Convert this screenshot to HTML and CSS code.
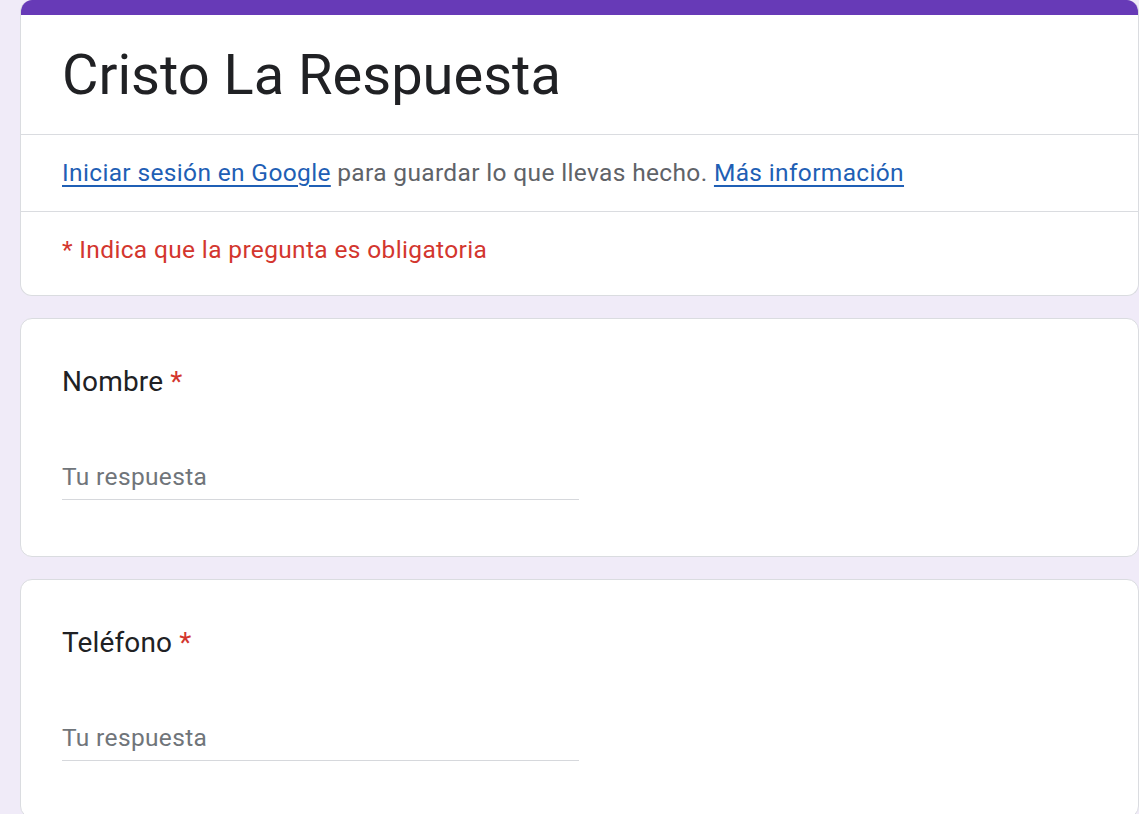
FILE: index.html
```html
<!DOCTYPE html>
<html>
<head>
    <meta charset="UTF-8">
    <title>Cristo La Respuesta</title>
    <link rel="stylesheet" href="styles.css">
</head>
<body>
<div id="form">
    <div class="card head">
        <div class="bar"></div>
        <h1 class="title">Cristo La Respuesta</h1>
        <div class="row signin">
            <a href="#">Iniciar sesión en Google</a> para guardar lo que llevas hecho. <a href="#">Más información</a>
        </div>
        <div class="row required">* Indica que la pregunta es obligatoria</div>
    </div>

    <div class="card question">
        <div class="label">Nombre <span class="star">*</span></div>
        <div class="answer">Tu respuesta</div>
    </div>

    <div class="card question">
        <div class="label">Teléfono <span class="star">*</span></div>
        <div class="answer">Tu respuesta</div>
    </div>
</div>
</body>
</html>
```

FILE: styles.css
```css
*{ margin:0; padding:0; box-sizing:border-box;}
html,body{
    height: 100%;
    overflow: hidden;
}
body{
    background: #f0ebf8;
    font-family: Roboto, "Liberation Sans", sans-serif;
    color: #202124;
}
#form{
    margin-left: 20px;
}
.card{
    background: #fff;
    border: 1px solid #dadce0;
    border-radius: 12px;
    margin-bottom: 22px;
    overflow: hidden;
}
.card.head{
    border-top: none;
}
.head .bar{
    height: 15px;
    background: #673ab7;
}
.head .title{
    font-size: 56px;
    font-weight: 400;
    line-height: 70px;
    padding: 25px 41px 24px;
    border-bottom: 1px solid #dadce0;
}
.row{
    font-size: 24.5px;
    letter-spacing: 0.35px;
    line-height: 36px;
    padding: 0 41px;
}
.signin{
    color: #5f6368;
    padding-top: 20px;
    padding-bottom: 20px;
    border-bottom: 1px solid #dadce0;
}
.signin a{
    color: #1f5fb5;
    text-decoration: underline;
    text-underline-offset: 4px;
}
.required{
    color: #d3362e;
    padding-top: 20px;
    padding-bottom: 27px;
}
.question{
    padding: 43px 41px 56px;
}
.question .label{
    font-size: 28px;
    letter-spacing: 0.15px;
    line-height: 40px;
}
.question .star{
    color: #d3362e;
}
.question .answer{
    width: 517px;
    margin-top: 57px;
    padding-bottom: 4px;
    font-size: 24.5px;
    letter-spacing: 0.35px;
    line-height: 36px;
    color: #70757a;
    border-bottom: 1px solid #d6d8dc;
}
```
